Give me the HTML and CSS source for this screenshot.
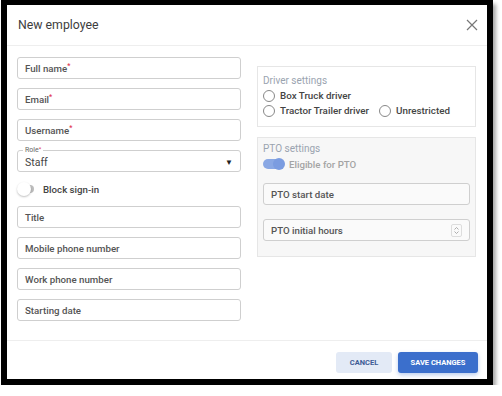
FILE: index.html
```html
<!DOCTYPE html>
<html lang="en">
<head>
    <meta charset="UTF-8">
    <meta name="viewport" content="width=device-width, initial-scale=1.0">
    <title>New employee</title>
    <link rel="stylesheet" href="styles.css">
</head>
<body>
    <div class="frame">
        <div class="modal-header">
            <h1>New employee</h1>
            <span class="close-btn">
                <svg width="12" height="12" viewBox="0 0 12 12"><path d="M1 1L11 11M11 1L1 11" stroke="#777" stroke-width="1.2" fill="none"/></svg>
            </span>
        </div>
        <div class="modal-body">
            <div class="col-left">
                <div class="field">Full name<span class="req">*</span></div>
                <div class="field">Email<span class="req">*</span></div>
                <div class="field">Username<span class="req">*</span></div>
                <div class="field select-field">
                    <span class="legend">Role<span class="req">*</span></span>
                    <span class="value">Staff</span>
                    <span class="arrow">&#9660;</span>
                </div>
                <div class="toggle-row">
                    <span class="toggle off"><span class="knob"></span></span>
                    <span class="toggle-label">Block sign-in</span>
                </div>
                <div class="field">Title</div>
                <div class="field">Mobile phone number</div>
                <div class="field">Work phone number</div>
                <div class="field">Starting date</div>
            </div>
            <div class="col-right">
                <div class="group driver">
                    <div class="group-title">Driver settings</div>
                    <div class="radio-row">
                        <label class="radio"><span class="circle"></span>Box Truck driver</label>
                    </div>
                    <div class="radio-row">
                        <label class="radio"><span class="circle"></span>Tractor Trailer driver</label>
                        <label class="radio"><span class="circle"></span>Unrestricted</label>
                    </div>
                </div>
                <div class="group pto">
                    <div class="group-title">PTO settings</div>
                    <div class="toggle-row pto-toggle">
                        <span class="toggle on"><span class="knob"></span></span>
                        <span class="toggle-label">Eligible for PTO</span>
                    </div>
                    <div class="field">PTO start date</div>
                    <div class="field number-field">PTO initial hours
                        <span class="spinner">
                            <svg width="7" height="9" viewBox="0 0 7 9"><path d="M1.5 3.5L3.5 1.5L5.5 3.5M1.5 5.5L3.5 7.5L5.5 5.5" stroke="#999" stroke-width="0.8" fill="none"/></svg>
                        </span>
                    </div>
                </div>
            </div>
        </div>
        <div class="modal-footer">
            <button class="btn btn-cancel">Cancel</button>
            <button class="btn btn-save">Save changes</button>
        </div>
    </div>
</body>
</html>
```

FILE: styles.css
```css
body {
    margin: 0;
    font-family: Roboto, "Liberation Sans", sans-serif;
    background: #fff;
}
.frame {
    margin-left: 1px;
    width: 480px;
    height: 374px;
    border-style: solid;
    border-color: #000;
    border-width: 5px 6px 6px 6px;
    background: #fff;
    box-shadow: 3px 4px 4px rgba(0, 0, 0, 0.35);
    display: flex;
    flex-direction: column;
}
.modal-header {
    height: 40px;
    border-bottom: 1px solid #eee;
    display: flex;
    align-items: center;
    justify-content: space-between;
    padding: 0 9px 0 11px;
}
.modal-header h1 {
    margin: 0;
    font-size: 12.3px;
    font-weight: 400;
    color: #3d3d3d;
}
.close-btn {
    display: flex;
}
.modal-body {
    height: 283px;
    padding: 11px 11px 0 10px;
    display: flex;
    gap: 16px;
    border-bottom: 1px solid #eee;
}
.col-left {
    width: 224px;
}
.col-right {
    width: 219px;
    margin-top: 9px;
}
.field {
    box-sizing: border-box;
    height: 22px;
    border: 1px solid #cfcfcf;
    border-radius: 3px;
    padding: 0 7px;
    margin-bottom: 9px;
    display: flex;
    align-items: center;
    font-size: 9.7px;
    font-weight: 500;
    color: #555;
    background: #fff;
}
.req {
    color: #e0314b;
    font-size: 7px;
    align-self: flex-start;
    margin-top: 4px;
}
.select-field {
    position: relative;
    font-weight: 400;
    color: #444;
    font-size: 10.5px;
}
.select-field .legend {
    position: absolute;
    left: 5px;
    top: -5px;
    background: #fff;
    padding: 0 2px;
    font-size: 7px;
    color: #666;
    display: flex;
}
.select-field .legend .req {
    font-size: 6px;
    margin-top: -1px;
}
.select-field .value {
    flex: 1;
    margin-top: 3px;
}
.select-field .arrow {
    font-size: 8px;
    color: #222;
    margin-top: 2px;
}
.toggle-row {
    height: 16px;
    margin-bottom: 9px;
    display: flex;
    align-items: center;
    gap: 9px;
}
.toggle {
    position: relative;
    border-radius: 4px;
}
.toggle .knob {
    position: absolute;
    border-radius: 50%;
}
.toggle.off {
    width: 13px;
    height: 8px;
    margin-left: 4px;
    background: #bdbdbd;
}
.toggle.off .knob {
    top: -3px;
    left: -4px;
    width: 14px;
    height: 14px;
    background: #fff;
    box-shadow: 0 1px 2px rgba(0, 0, 0, 0.25);
}
.toggle.on {
    width: 20px;
    height: 10px;
    border-radius: 5px;
    background: #8aa8e4;
}
.toggle.on .knob {
    top: -1px;
    left: 10px;
    width: 12px;
    height: 12px;
    background: #7b9ce0;
}
.toggle-label {
    font-size: 9.7px;
    font-weight: 500;
    color: #444;
}
.group {
    box-sizing: border-box;
    border: 1px solid #e6e6e6;
    padding: 0 5px;
}
.group-title {
    font-size: 10px;
    color: #9aa3af;
    height: 16px;
    display: flex;
    align-items: center;
}
.driver {
    height: 61px;
    padding-top: 5px;
    margin-bottom: 10px;
}
.radio-row {
    display: flex;
    gap: 10px;
    height: 15px;
    align-items: center;
}
.radio {
    display: flex;
    align-items: center;
    gap: 5px;
    font-size: 9.8px;
    font-weight: 500;
    color: #444;
}
.circle {
    box-sizing: border-box;
    width: 12px;
    height: 12px;
    border: 1px solid #888;
    border-radius: 50%;
}
.pto {
    height: 120px;
    padding-top: 2px;
    background: #f7f7f7;
}
.pto .toggle-label {
    color: #a4a4a4;
}
.pto-toggle {
    gap: 6px;
    margin-bottom: 11px;
}
.pto .field {
    height: 22px;
    margin-bottom: 14px;
    background: #fafafa;
}
.number-field {
    justify-content: space-between;
}
.spinner {
    display: flex;
    align-items: center;
    justify-content: center;
    width: 9px;
    height: 11px;
    border: 1px solid #ddd;
    border-radius: 2px;
}
.modal-footer {
    flex: 1;
    display: flex;
    justify-content: flex-end;
    align-items: flex-start;
    gap: 6px;
    padding: 11px 9px 0 0;
}
.btn {
    height: 21px;
    border: none;
    border-radius: 3px;
    font-family: Roboto, "Liberation Sans", sans-serif;
    font-size: 7.5px;
    font-weight: 700;
    text-transform: uppercase;
    cursor: pointer;
}
.btn-cancel {
    width: 56px;
    background: #e3eaf6;
    color: #3e5b95;
}
.btn-save {
    width: 80px;
    background: #3b6fcc;
    color: #fff;
    box-shadow: 0 2px 4px rgba(59, 111, 204, 0.35);
}
```
